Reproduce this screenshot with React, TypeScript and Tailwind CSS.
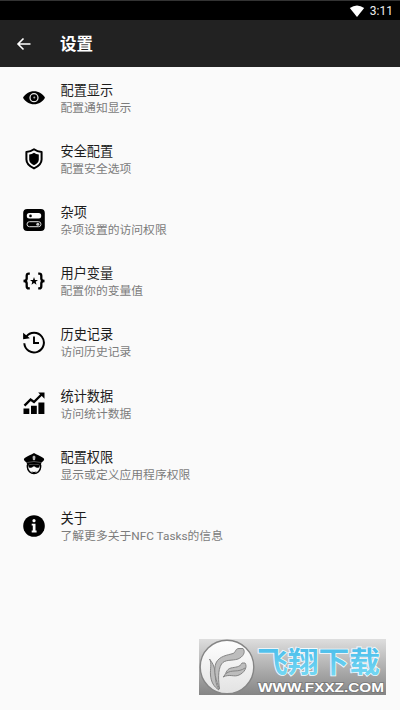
import type { ReactNode } from "react";

type SettingItem = {
  title: string;
  summary: string;
  icon: ReactNode;
};

const EyeIcon = () => (
  <svg viewBox="0 0 24 24" className="size-6">
    <path d="M1 11.700C3.400 7.800 7.200 5.200 12 5.200S20.600 7.800 23 11.700C20.600 15.600 16.800 18.200 12 18.200S3.400 15.600 1 11.700Z" />
    <circle cx="12" cy="11.700" r="4" fill="none" stroke="#e8e8e8" strokeWidth="1.300" />
    <circle cx="12.300" cy="11.500" r="1" fill="#aaa" />
  </svg>
);

const ShieldIcon = () => (
  <svg viewBox="0 0 24 24" className="size-6">
    <path
      d="M12 2.300C10 3.700 6.900 4.700 4.400 4.900V12.500C4.400 16.700 8.200 19.600 12 21.400C15.800 19.600 19.600 16.700 19.600 12.500V4.900C17.100 4.700 14 3.700 12 2.300Z"
      fill="none"
      stroke="#000"
      strokeWidth="2"
      strokeLinejoin="round"
    />
    <path d="M12 5.700C10.600 6.600 9 7.300 7.200 7.600V12.700C7.200 15.200 9.600 17 12 18.300C14.400 17 16.800 15.200 16.800 12.700V7.600C15 7.300 13.400 6.600 12 5.700Z" />
  </svg>
);

const TogglesIcon = () => (
  <svg viewBox="0 0 24 24" className="size-6">
    <rect x="1.200" y="1" width="21.600" height="22" rx="4" />
    <rect x="4.800" y="5" width="14.400" height="5.600" rx="2.500" fill="#fafafa" />
    <circle cx="8.500" cy="7.900" r="1.300" />
    <rect x="5" y="13.700" width="14" height="5" rx="2.500" fill="none" stroke="#ddd" strokeWidth="1" />
    <circle cx="15.800" cy="16.200" r="1.500" fill="#ccc" />
  </svg>
);

const VariableIcon = () => (
  <svg viewBox="0 0 24 24" className="size-6">
    <g fill="none" stroke="#000" strokeWidth="2.300">
      <path d="M7.800 4.600H6.800Q4.700 4.600 4.700 6.800V9.500Q4.700 12 1.500 12Q4.700 12 4.700 14.500V17.200Q4.700 19.400 6.800 19.400H7.800" />
      <path d="M16.200 4.600H17.200Q19.300 4.600 19.300 6.800V9.500Q19.300 12 22.500 12Q19.300 12 19.300 14.500V17.200Q19.300 19.400 17.200 19.400H16.200" />
    </g>
    <path d="M12 8.100L13 10.900L16 11L13.700 12.800L14.500 15.700L12 14L9.500 15.700L10.300 12.800L8 11L11 10.900Z" />
  </svg>
);

const HistoryIcon = () => (
  <svg viewBox="0 0 24 24" className="size-6">
    <path
      d="M4.200 6.800A9.800 9.800 0 1 1 2.300 13.300"
      fill="none"
      stroke="#000"
      strokeWidth="2"
    />
    <path d="M1.100 2.800V9.300L7.900 8.300Z" />
    <path d="M12 6.400V13H17" fill="none" stroke="#000" strokeWidth="1.900" />
  </svg>
);

const StatsIcon = () => (
  <svg viewBox="0 0 24 24" className="size-6">
    <path d="M1.500 17.500H7.300V23H1.500ZM9 14.800H14.800V23H9ZM16.400 11.500H22.400V23H16.400Z" />
    <path d="M2.500 14.700L8.600 8.500L12 11L19.500 3.500" fill="none" stroke="#000" strokeWidth="2.400" />
    <path d="M16.200 1.600H22.500V7.700Z" />
  </svg>
);

const OfficerIcon = () => (
  <svg viewBox="0 0 24 24" className="size-6">
    <path d="M12 .9C14.800 2.700 18 3.500 21.300 5.900C23 7.100 22 8.800 19.400 10.500L18.800 13.300Q12 11.400 5.200 13.300L4.600 10.500C2 8.800 1 7.100 2.700 5.900C6 3.500 9.200 2.700 12 .9Z" />
    <path d="M12 3.400L13.500 4.800L13.100 7.500L12 8.600L10.900 7.500L10.500 4.800Z" fill="#bbb" />
    <path d="M5.300 10.500Q12 8.500 18.700 10.500" stroke="#888" strokeWidth=".6" fill="none" />
    <path
      d="M5.400 12.700V15C5.600 19 8.600 21.600 12 21.600S18.400 19 18.600 15V12.700"
      fill="none"
      stroke="#000"
      strokeWidth="1.500"
    />
    <path d="M6 13.200Q12 11.500 18 13.200L17 15.400Q14.300 16.600 12.900 14.600H11.100Q9.700 16.600 7 15.400Z" />
    <path d="M9.300 19.600Q12 20.500 14.700 19.600L12 21.800Z" />
  </svg>
);

const InfoIcon = () => (
  <svg viewBox="0 0 24 24" className="size-6">
    <circle cx="12" cy="12" r="10.800" />
    <circle cx="12" cy="6.700" r="1.600" fill="#fafafa" />
    <path d="M9.700 9.800H13.500V16.600H14.600V18.400H9.700V16.600H10.800V11.600H9.700Z" fill="#fafafa" />
  </svg>
);

const items: SettingItem[] = [
  { title: "配置显示", summary: "配置通知显示", icon: <EyeIcon /> },
  { title: "安全配置", summary: "配置安全选项", icon: <ShieldIcon /> },
  { title: "杂项", summary: "杂项设置的访问权限", icon: <TogglesIcon /> },
  { title: "用户变量", summary: "配置你的变量值", icon: <VariableIcon /> },
  { title: "历史记录", summary: "访问历史记录", icon: <HistoryIcon /> },
  { title: "统计数据", summary: "访问统计数据", icon: <StatsIcon /> },
  { title: "配置权限", summary: "显示或定义应用程序权限", icon: <OfficerIcon /> },
  { title: "关于", summary: "了解更多关于NFC Tasks的信息", icon: <InfoIcon /> },
];

const SiteBadge = () => (
  <div className="absolute left-[199px] top-[639px] h-14 w-[187px] bg-linear-to-b from-[#dedede] to-[#858585]">
    <svg viewBox="0 0 187 56" className="h-14 w-[187px]">
      <defs>
        <linearGradient id="disc" x1="0" y1="0" x2="0" y2="1">
          <stop offset="0" stopColor="#fff" />
          <stop offset="1" stopColor="#e2e2e2" />
        </linearGradient>
        <linearGradient id="sky" x1="0" y1="0" x2="0" y2="1">
          <stop offset="0" stopColor="#3fb5e8" />
          <stop offset="1" stopColor="#7bdcf4" />
        </linearGradient>
      </defs>
      <circle cx="28" cy="28" r="26.800" fill="url(#disc)" stroke="#858585" strokeWidth="1.400" />
      <g fill="#bdbdbd" stroke="#858585" strokeWidth="1" strokeLinejoin="round">
        <path d="M10.500 20C13 24 11 30 11.500 36C12 43 15 48 20 51C16 44 16.500 38 16 33C15.500 27 13 23 10.500 20Z" />
        <path d="M20.500 50C17 42 14 31 17 24C20 17 29 16 34 14.500C37 13.500 36 9.500 40 9.500H44C47 13 44 18 39 20C33 22 26 20 22.500 25C18.500 31 19.500 42 20.500 50Z" />
        <path d="M24 38C27 36 27 30 32 29C36 28 41 28.500 43 24H46C49 28 45 34 40 36C35 38.500 31 34.500 24 38Z" />
      </g>
      <path d="M27 34.500C33 30 39 34 46 29" fill="none" stroke="#858585" />
      <text
        x="58"
        y="33.500"
        textLength="123"
        lengthAdjust="spacingAndGlyphs"
        fill="url(#sky)"
        stroke="#f4fbff"
        strokeWidth="1.600"
        paintOrder="stroke"
        className="font-['Noto_Sans_CJK_SC',sans-serif] text-[29px] font-bold"
      >
        飞翔下载
      </text>
      <text
        x="59"
        y="52.500"
        textLength="126"
        lengthAdjust="spacingAndGlyphs"
        fill="#fff"
        stroke="#777"
        strokeWidth="1.400"
        paintOrder="stroke"
        className="font-['Liberation_Sans',sans-serif] text-[12.500px] font-bold"
      >
        WWW.FXXZ.COM
      </text>
    </svg>
  </div>
);

const App = () => {
  return (
    <div className="relative h-[710px] w-[400px] overflow-hidden bg-[#fafafa] font-[Roboto,'Noto_Sans_CJK_SC',sans-serif]">
      {/* Status bar */}
      <div className="flex h-5 items-center justify-end border-t border-[#333] bg-black pr-[7px] text-white">
        <svg viewBox="0 0 16 12" className="mr-[5px] h-3 w-4">
          <path d="M.8 3.100Q8-2.200 15.200 3.100L8 12Z" fill="#fff" />
        </svg>
        <span className="text-[12px] leading-3 text-[#eee]">3:11</span>
      </div>

      {/* App bar */}
      <header className="flex h-[47px] items-center bg-[#222] text-white">
        <svg viewBox="0 0 16 16" className="ml-4 size-4">
          <path d="M14.500 8H2.500M7.500 2.500L2 8L7.500 13.500" fill="none" stroke="#fff" strokeWidth="1.600" />
        </svg>
        <h1 className="ml-7 pt-0.5 text-[16.500px] leading-6 font-bold">设置</h1>
      </header>

      {/* Preferences */}
      <ul>
        {items.map((item) => (
          <li key={item.title} className="flex h-[61.150px] items-center pl-[22px]">
            {item.icon}
            <div className="ml-[14.500px] pt-[3.500px]">
              <p className="text-[13.200px] leading-[18px] text-[#1c1c1c]">{item.title}</p>
              <p className="text-[11.800px] leading-[17px] text-[#7c7c7c]">{item.summary}</p>
            </div>
          </li>
        ))}
      </ul>

      <SiteBadge />
    </div>
  );
};

export default App;
